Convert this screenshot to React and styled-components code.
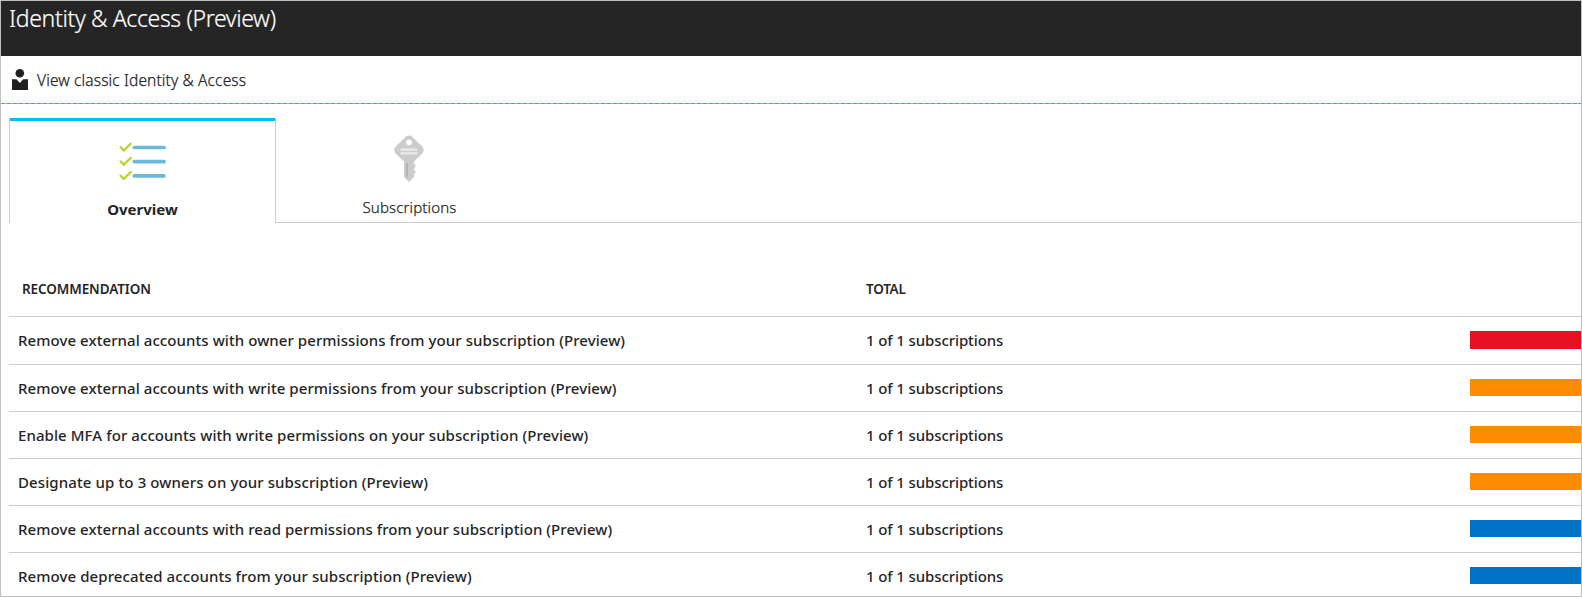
import React from 'react';
import styled, { createGlobalStyle } from 'styled-components';

const GlobalStyle = createGlobalStyle`
  *, *::before, *::after { box-sizing: border-box; }
  body {
    margin: 0;
    overflow: hidden;
    background: #fff;
    color: #252525;
    font-family: "Noto Sans", "Open Sans", sans-serif;
  }
`;

const Blade = styled.main`
  display: flex;
  flex-direction: column;
  height: 100vh;
  overflow: hidden;
  border: 1px solid #bfbfbf;
`;

const Header = styled.header`
  flex: none;
  height: 55px;
  padding: 2px 0 0 8px;
  background: #252525;
`;

const Title = styled.h1`
  margin: 0;
  color: #fff;
  font-size: 23px;
  font-weight: 300;
  line-height: 31px;
  letter-spacing: -0.35px;
  white-space: nowrap;
  -webkit-text-stroke: 0.2px currentColor;
`;

const CommandBar = styled.div`
  flex: none;
  display: flex;
  align-items: center;
  height: 48px;
  padding: 0 0 0 11px;
  background: repeating-linear-gradient(90deg, #00bcf2 0 4px, #b5b5b5 4px 6px) left bottom / 100% 1px no-repeat;
`;

const Command = styled.button`
  display: flex;
  align-items: center;
  gap: 9px;
  padding: 0;
  border: 0;
  background: none;
  color: #252525;
  font: 300 15.5px/22px "Noto Sans", sans-serif;
  letter-spacing: 0.14px;
  -webkit-text-stroke: 0.25px currentColor;
`;

const TabList = styled.nav`
  flex: none;
  display: flex;
  height: 105px;
  margin: 14px 0 0 8px;
`;

const Tab = styled.div`
  display: flex;
  flex-direction: column;
  align-items: center;
  width: 267px;
  padding-top: ${(p) => (p.$active ? '21px' : '17px')};
  border: solid #ccc;
  border-width: ${(p) => (p.$active ? '0 1px' : '0 0 1px')};
  position: relative;

  &::before {
    content: '';
    display: ${(p) => (p.$active ? 'block' : 'none')};
    position: absolute;
    inset: 0 0 auto 0;
    height: 3px;
    background: #00bcf2;
  }
`;

const TabLabel = styled.span`
  margin-top: ${(p) => (p.$active ? '13px' : '13px')};
  font-size: 15px;
  line-height: 22px;
  font-weight: ${(p) => (p.$active ? 700 : 300)};
  letter-spacing: ${(p) => (p.$active ? '0' : '0.15px')};
  -webkit-text-stroke: ${(p) => (p.$active ? '0' : '0.25px')} currentColor;
`;

const TabRule = styled.div`
  flex: 1;
  border-bottom: 1px solid #ccc;
`;

const Table = styled.section`
  flex: none;
  margin: 48px 0 0 8px;
`;

const gridColumns = '857px 604px 1fr';

const HeadRow = styled.div`
  display: grid;
  grid-template-columns: ${gridColumns};
  align-items: center;
  height: 46px;
  padding-bottom: 9px;
  border-bottom: 1px solid #ccc;
`;

const HeadCell = styled.span`
  padding-left: ${(p) => p.$indent || 0}px;
  font-size: 13.5px;
  font-weight: 600;
  letter-spacing: ${(p) => p.$tracking}px;
`;

const Row = styled.div`
  display: grid;
  grid-template-columns: ${gridColumns};
  align-items: center;
  height: ${(p) => (p.$tall ? 48 : 47)}px;
  padding-bottom: ${(p) => (p.$tall ? 1 : 0)}px;
  border-bottom: 1px solid #ccc;
  font-size: 15px;
  line-height: 20px;
  font-weight: 500;
  white-space: nowrap;
`;

const Name = styled.span`
  padding-left: 9px;
  letter-spacing: ${(p) => p.$tracking}px;
`;

const Total = styled.span`
  letter-spacing: -0.11px;
`;

const Bar = styled.span`
  height: ${(p) => (p.$tall ? 18 : 17)}px;
  margin-bottom: ${(p) => (p.$tall ? 0 : 1)}px;
  background: ${(p) => p.$color};
`;

const UserIcon = () => (
  <svg width="16" height="22" viewBox="0 0 16 22" fill="#1f1f1f">
    <circle cx="7.8" cy="4.3" r="4.3" />
    <path d="M0 10.2h4.4L7.8 14l3.4-3.8H16V21H0z" />
  </svg>
);

const ChecklistIcon = () => (
  <svg width="48" height="46" viewBox="0 0 48 46" fill="none">
    {[0, 14.2, 28.4].map((y) => (
      <g key={y} transform={`translate(0 ${y})`}>
        <path d="M1 7.6l3.8 3.8L12.4 4" stroke="#b8d432" strokeWidth="2.3" />
        <path d="M15.4 8.5h29.6" stroke="#68bbdb" strokeWidth="3.7" strokeLinecap="round" />
      </g>
    ))}
  </svg>
);

const KeyIcon = () => (
  <svg width="31" height="48" viewBox="0 0 31 48">
    <path fill="#ccc" fillRule="evenodd" d="M12 1.4Q15 -.2 18 1.4L28.4 11.4Q31 15 28.4 18.6L20 26.5V29l2 2-2 2v2l2 2-2 2v3l-5 5-5-5V26.5L1.6 18.6Q-1 15 1.6 11.4zM15 4.5a3 3 0 1 0 .01 0z" />
    <path fill="#eaeaea" d="M6.5 13.5h17v2.2h-17zM6.5 17.2h17v2.2h-17z" />
    <path fill="#b3b3b3" d="M12 28h2v15l-2-2z" />
  </svg>
);

const recommendations = [
  { name: 'Remove external accounts with owner permissions from your subscription (Preview)', color: '#e81123', tracking: 0.07 },
  { name: 'Remove external accounts with write permissions from your subscription (Preview)', color: '#ff8c00', tracking: 0.07 },
  { name: 'Enable MFA for accounts with write permissions on your subscription (Preview)', color: '#ff8c00', tracking: 0.08 },
  { name: 'Designate up to 3 owners on your subscription (Preview)', color: '#ff8c00', tracking: 0.11 },
  { name: 'Remove external accounts with read permissions from your subscription (Preview)', color: '#0072c6', tracking: 0.07 },
  { name: 'Remove deprecated accounts from your subscription (Preview)', color: '#0072c6', tracking: 0.09 },
];

export default function App() {
  return (
    <Blade>
      <GlobalStyle />
      <Header>
        <Title>Identity &amp; Access (Preview)</Title>
      </Header>
      <CommandBar>
        <Command>
          <UserIcon />
          View classic Identity &amp; Access
        </Command>
      </CommandBar>
      <TabList>
        <Tab $active>
          <ChecklistIcon />
          <TabLabel $active>Overview</TabLabel>
        </Tab>
        <Tab>
          <KeyIcon />
          <TabLabel>Subscriptions</TabLabel>
        </Tab>
        <TabRule />
      </TabList>
      <Table>
        <HeadRow>
          <HeadCell $indent={13} $tracking={-0.1}>RECOMMENDATION</HeadCell>
          <HeadCell $tracking={-0.25}>TOTAL</HeadCell>
        </HeadRow>
        {recommendations.map((r, i) => (
          <Row key={r.name} $tall={i === 0}>
            <Name $tracking={r.tracking}>{r.name}</Name>
            <Total>1 of 1 subscriptions</Total>
            <Bar $color={r.color} $tall={i === 0} />
          </Row>
        ))}
      </Table>
    </Blade>
  );
}
